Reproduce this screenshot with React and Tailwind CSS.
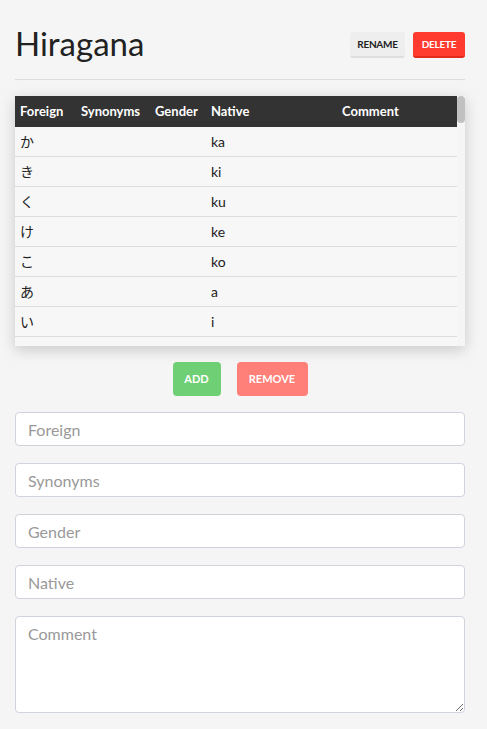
import React from "react";

const rows = [
  ["か", "ka"], ["き", "ki"], ["く", "ku"], ["け", "ke"], ["こ", "ko"],
  ["あ", "a"], ["い", "i"], ["う", "u"], ["え", "e"], ["お", "o"],
  ["さ", "sa"], ["し", "shi"], ["す", "su"], ["せ", "se"], ["そ", "so"],
  ["た", "ta"], ["ち", "chi"], ["つ", "tsu"], ["て", "te"], ["と", "to"],
];

const cols = "grid grid-cols-[61px_74px_56px_131px_1fr]";

export default function App() {
  return (
    <div
      className="min-h-[729px] bg-[#f5f5f5] pl-[15px] pr-[22px] pt-[21px] pb-4 text-[#222]"
      style={{ fontFamily: "Lato, 'Noto Sans CJK JP', sans-serif" }}
    >
      <div className="flex items-center justify-between h-[48px]">
        <h1 className="text-[33px] leading-none font-normal text-[#222] -mt-[4px]">Hiragana</h1>
        <div className="flex gap-[8px]">
          <button className="h-[26px] w-[55px] rounded-[3px] bg-[#eeeeee] border-b-[2px] border-[#dedede] text-[10px] font-bold text-[#222] tracking-tight">
            RENAME
          </button>
          <button className="h-[26px] w-[52px] rounded-[3px] bg-[#ff3b30] border-b-[2px] border-[#e3281d] text-[10px] font-bold text-white tracking-tight">
            DELETE
          </button>
        </div>
      </div>
      <div className="mt-[10px] h-px bg-[#dddddd]" />

      <div className="relative mt-[16px] h-[250px] bg-[#f7f7f7] shadow-[0_4px_14px_rgba(0,0,0,0.18)] overflow-hidden">
        <div className="mr-[8px]">
          <div className={`${cols} h-[31px] items-center bg-[#333333] text-white text-[13px] font-bold`}>
            <div className="pl-[5px]">Foreign</div>
            <div className="pl-[5px]">Synonyms</div>
            <div className="pl-[5px]">Gender</div>
            <div className="pl-[5px]">Native</div>
            <div className="pl-[5px]">Comment</div>
          </div>
          {rows.map(([f, n], i) => (
            <div key={i} className={`${cols} h-[30px] items-center border-b border-[#dddddd] text-[14px] text-[#222]`}>
              <div className="pl-[5px]">{f}</div>
              <div className="pl-[5px]"></div>
              <div className="pl-[5px]"></div>
              <div className="pl-[5px]">{n}</div>
              <div className="pl-[5px]"></div>
            </div>
          ))}
        </div>
        <div className="absolute right-0 top-0 h-full w-[8px] bg-[#f5f5f5]">
          <div className="h-[27px] w-[8px] rounded-[4px] bg-[#c1c1c1]" />
        </div>
      </div>

      <div className="mt-[16px] flex justify-center gap-[16px]">
        <button className="h-[34px] w-[48px] rounded-[4px] bg-[#6fcf75] text-white text-[11px] font-bold">ADD</button>
        <button className="h-[34px] w-[71px] rounded-[4px] bg-[#ff7f79] text-white text-[11px] font-bold">REMOVE</button>
      </div>

      <div className="mt-[16px] flex flex-col gap-[17px]">
        {["Foreign", "Synonyms", "Gender", "Native"].map((p) => (
          <input
            key={p}
            placeholder={p}
            className="h-[34px] w-full rounded-[4px] border border-[#cfd4dc] bg-white px-[12px] text-[16px] text-[#222] placeholder:text-[#999] outline-none"
          />
        ))}
        <textarea
          placeholder="Comment"
          className="h-[97px] w-full rounded-[4px] border border-[#cfd4dc] bg-white px-[12px] py-[5px] text-[16px] text-[#222] placeholder:text-[#999] outline-none"
        />
      </div>
    </div>
  );
}
